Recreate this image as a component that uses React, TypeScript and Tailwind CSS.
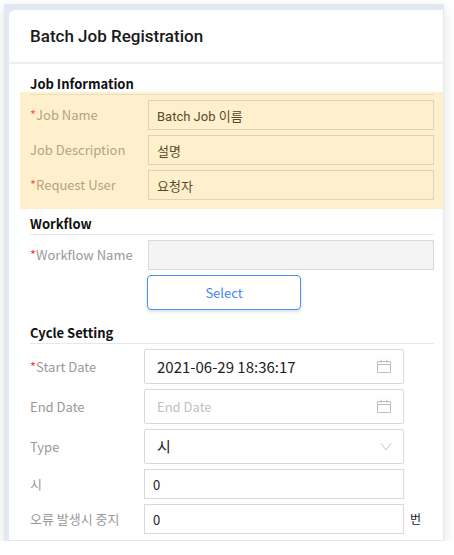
import type { ReactNode } from 'react';

const boxed = 'w-full border border-[#d9d9d9] bg-white text-[#222] outline-none';

function Section({ title, children, className = '' }: { title: string; children: ReactNode; className?: string }) {
  return (
    <section className={`relative ${className}`}>
      <h2 className="border-b border-[#e1e8f0] text-[13px] leading-5 font-bold text-[#111]">{title}</h2>
      <div className="mt-[5px] flex flex-col gap-[5px]">{children}</div>
    </section>
  );
}

function Label({ id, required, wide, children }: { id: string; required?: boolean; wide?: boolean; children: ReactNode }) {
  return (
    <label htmlFor={id} className={`shrink-0 text-[13px] leading-5 text-[#999] ${wide ? 'w-[118px]' : 'w-[114px]'}`}>
      {required && <span className="text-[#ff3b30]">*</span>}
      {children}
    </label>
  );
}

function CalendarIcon() {
  return (
    <svg viewBox="0 0 14 14" className="pointer-events-none absolute top-[10px] right-[13px] size-3.5" fill="none" stroke="#bfbfbf" aria-hidden="true">
      <path d="M0.5 2.5h13v11h-13zM0.5 5.5h13M4 0.5v3.5M10 0.5v3.5" />
    </svg>
  );
}

export default function App() {
  return (
    <main
      className="mt-1 mr-[10px] ml-1 bg-[#e3e8f2] pt-1.5 pr-px pb-px pl-[5px] shadow-[0_4px_12px_rgba(0,0,0,0.12)]"
      style={{ fontFamily: '"Noto Sans CJK KR", sans-serif' }}
    >
      <form className="rounded-tl-md bg-white" onSubmit={(e) => e.preventDefault()}>
        <header className="flex h-[54px] items-center border-b-2 border-[#eaf0f6] px-[21px]">
          <h1 className="font-[Roboto] text-[17px] leading-6 font-medium text-[#1a1a1a]">Batch Job Registration</h1>
        </header>

        <div className="pt-[10px] pr-[9px] pb-1.5 pl-[21px]">
          <Section title="Job Information">
            <div className="flex items-center">
              <Label id="job-name" required wide>Job Name</Label>
              <input id="job-name" defaultValue="Batch Job 이름" className={`${boxed} h-[30px] px-2 font-[Roboto,'Noto_Sans_CJK_KR',sans-serif] text-[13px]`} />
            </div>
            <div className="flex items-center">
              <Label id="job-desc" wide>Job Description</Label>
              <input id="job-desc" defaultValue="설명" className={`${boxed} h-[30px] px-2 text-[13px]`} />
            </div>
            <div className="flex items-center">
              <Label id="user" required wide>Request User</Label>
              <input id="user" defaultValue="요청자" className={`${boxed} h-[30px] px-2 text-[13px]`} />
            </div>
            <div className="pointer-events-none absolute top-[18px] -right-[9px] -bottom-[9px] -left-[10px] bg-[#ffc337]/25" />
          </Section>

          <Section title="Workflow" className="mt-[14px]">
            <div className="flex items-center">
              <Label id="workflow" required wide>Workflow Name</Label>
              <input id="workflow" readOnly className={`${boxed} h-[30px] px-2 text-[13px] !bg-[#f4f4f4]`} />
            </div>
            <div className="flex pl-[117px]">
              <button type="button" className="h-[35px] w-[154px] rounded border border-[#4a90f5] bg-white text-[13px] text-[#4285f4] shadow-[0_2px_3px_rgba(0,0,0,0.12)]">
                Select
              </button>
            </div>
          </Section>

          <Section title="Cycle Setting" className="mt-[13px]">
            <div className="flex items-center pr-[30px]">
              <Label id="start" required>Start Date</Label>
              <div className="relative grow">
                <input id="start" defaultValue="2021-06-29 18:36:17" className={`${boxed} block h-[35px] rounded-xs px-3 text-[15px]`} />
                <CalendarIcon />
              </div>
            </div>
            <div className="flex items-center pr-[30px]">
              <Label id="end">End Date</Label>
              <div className="relative grow">
                <input id="end" placeholder="End Date" className={`${boxed} block h-[35px] rounded-xs px-3 text-[13px] placeholder:text-[#bfbfbf]`} />
                <CalendarIcon />
              </div>
            </div>
            <div className="flex items-center pr-[30px]">
              <Label id="type">Type</Label>
              <div className="relative grow">
                <select id="type" className={`${boxed} block h-[35px] appearance-none rounded-xs px-3 text-[15px]`}>
                  <option>시</option>
                </select>
                <svg viewBox="0 0 12 10" className="pointer-events-none absolute top-[13px] right-3 h-2.5 w-3" fill="none" stroke="#c4c4c4" aria-hidden="true">
                  <path d="M1 1.5 6 8l5-6.5" />
                </svg>
              </div>
            </div>
            <div className="flex items-center pr-[30px]">
              <Label id="hour">시</Label>
              <input id="hour" defaultValue="0" className={`${boxed} h-[30px] px-2 text-[13px]`} />
            </div>
            <div className="flex items-center">
              <Label id="stop">오류 발생시 중지</Label>
              <input id="stop" defaultValue="0" className={`${boxed} h-[30px] px-2 text-[13px]`} />
              <span className="w-[30px] shrink-0 pl-1.5 text-xs text-[#222]">번</span>
            </div>
          </Section>
        </div>
      </form>
    </main>
  );
}
